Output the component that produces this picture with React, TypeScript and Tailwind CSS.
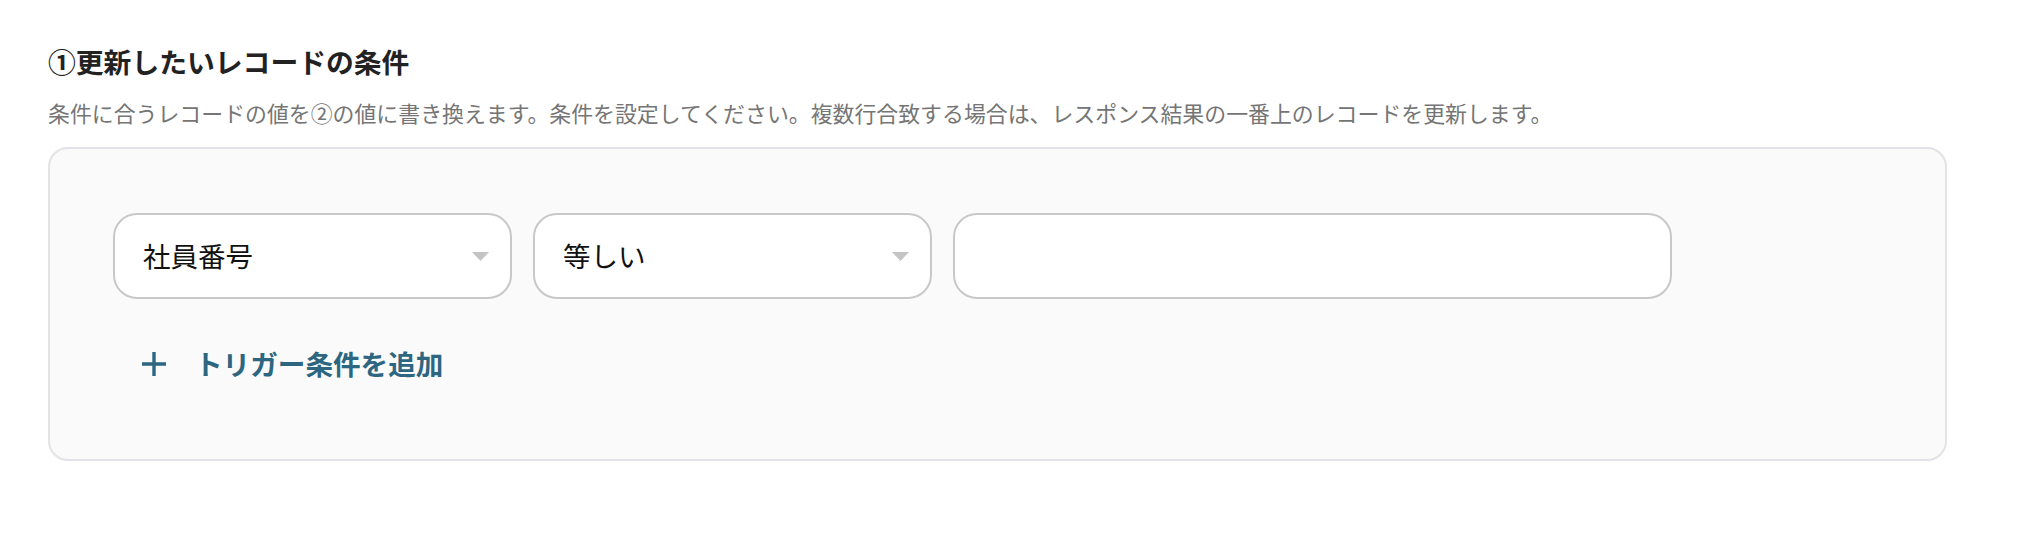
import { useState } from "react";

const font = { fontFamily: '"Noto Sans CJK JP", "Noto Sans", sans-serif' };

function Caret() {
  return (
    <svg width="17" height="9" viewBox="0 0 17 9" className="shrink-0">
      <path d="M0 0h17L8.5 9z" fill="#c4c4c4" />
    </svg>
  );
}

function SelectBox({ value }: { value: string }) {
  return (
    <button
      type="button"
      className="flex h-[86px] w-[399px] items-center justify-between rounded-[24px] border-2 border-[#c8c8c8] bg-white pl-[28px] pr-[21px] text-left"
    >
      <span className="text-[27.5px] leading-none text-[#111]">{value}</span>
      <Caret />
    </button>
  );
}

export default function App() {
  const [text, setText] = useState("");

  return (
    <div className="min-h-screen bg-white pl-[48px] pt-[43px]" style={font}>
      <h2 className="text-[27.8px] font-bold leading-[36px] text-[#222]">
        ①更新したいレコードの条件
      </h2>
      <p className="mt-[19px] text-[21.9px] leading-[30px] text-[#757575]">
        条件に合うレコードの値を②の値に書き換えます。条件を設定してください。複数行合致する場合は、レスポンス結果の一番上のレコードを更新します。
      </p>

      <div className="mt-[19px] h-[314px] w-[1899px] rounded-[20px] border-2 border-[#e1e3e7] bg-[#fafafa] pl-[63px] pt-[64px]">
        <div className="flex gap-[21px]">
          <SelectBox value="社員番号" />
          <SelectBox value="等しい" />
          <input
            value={text}
            onChange={(e) => setText(e.target.value)}
            className="h-[86px] w-[719px] rounded-[24px] border-2 border-[#c8c8c8] bg-white px-[28px] text-[27.5px] outline-none"
          />
        </div>

        <button
          type="button"
          className="ml-[29px] mt-[47px] flex h-[36px] items-center gap-[29px] text-[#2c6680]"
        >
          <svg width="24" height="24" viewBox="0 0 24 24">
            <path d="M12 0v24M0 12h24" stroke="currentColor" strokeWidth="3.4" />
          </svg>
          <span className="text-[27.6px] font-bold leading-none">トリガー条件を追加</span>
        </button>
      </div>
    </div>
  );
}
